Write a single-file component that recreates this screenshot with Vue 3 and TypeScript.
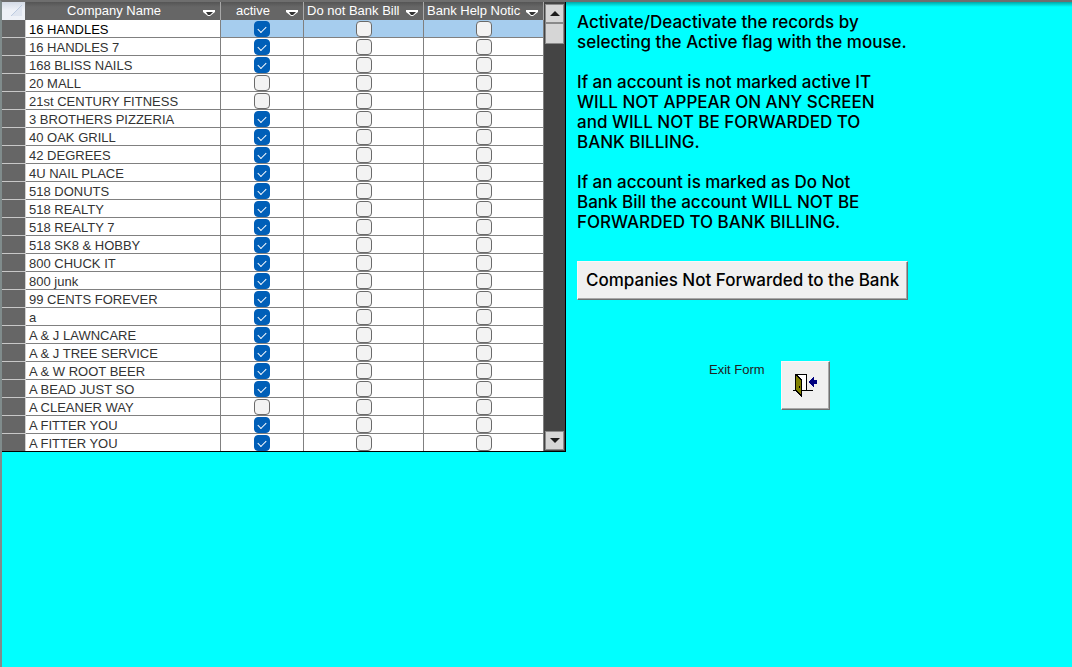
<script setup lang="ts">
import { ref } from 'vue'

interface Company {
  name: string
  active: boolean
  noBill: boolean
  helpNotice: boolean
}

const inactive = new Set([3, 4, 21])
const names: string[] = [
  '16 HANDLES', '16 HANDLES 7', '168 BLISS NAILS', '20 MALL',
  '21st CENTURY FITNESS', '3 BROTHERS PIZZERIA', '40 OAK GRILL', '42 DEGREES',
  '4U NAIL PLACE', '518 DONUTS', '518 REALTY', '518 REALTY 7',
  '518 SK8 & HOBBY', '800 CHUCK IT', '800 junk', '99 CENTS FOREVER',
  'a', 'A & J LAWNCARE', 'A & J TREE SERVICE', 'A & W ROOT BEER',
  'A BEAD JUST SO', 'A CLEANER WAY', 'A FITTER YOU', 'A FITTER YOU',
]

const companies = ref<Company[]>(
  names.map((name, i) => ({ name, active: !inactive.has(i), noBill: false, helpNotice: false })),
)
const current = ref(0)
const headings: string[] = ['Company Name', 'active', 'Do not Bank Bill', 'Bank Help Notic']
</script>

<template>
  <main class="form">
    <section class="datasheet">
      <table>
        <colgroup>
          <col class="c-select" />
          <col class="c-name" />
          <col class="c-active" />
          <col class="c-flag" />
          <col class="c-flag" />
        </colgroup>
        <thead>
          <tr>
            <th class="corner">
              <svg width="24" height="18" viewBox="0 0 24 18" aria-hidden="true">
                <path d="M20 3V14H9Z" fill="#dfe5f0" />
                <path d="M9 14L20 3" stroke="#bccbe0" />
              </svg>
            </th>
            <th v-for="(h, i) in headings" :key="h" scope="col">
              <div class="head">
                <span class="label" :class="{ centered: i < 2 }">{{ h }}</span>
                <button type="button" class="drop" :aria-label="'Filter ' + h">
                  <svg width="12" height="7" viewBox="0 0 12 7">
                    <path d="M0 0H12V2L7 6H5L0 2Z" fill="#fff" />
                    <path d="M3 2H10L7 5H5Z" fill="#333" />
                  </svg>
                </button>
              </div>
            </th>
          </tr>
        </thead>
        <tbody>
          <tr v-for="(c, i) in companies" :key="i" :class="{ current: i === current }" @click="current = i">
            <th class="selector"></th>
            <td class="name">{{ c.name }}</td>
            <td class="flag"><input v-model="c.active" type="checkbox" :aria-label="c.name + ' active'" /></td>
            <td class="flag"><input v-model="c.noBill" type="checkbox" :aria-label="c.name + ' do not bank bill'" /></td>
            <td class="flag"><input v-model="c.helpNotice" type="checkbox" :aria-label="c.name + ' bank help notice'" /></td>
          </tr>
        </tbody>
      </table>
      <div class="scrollbar">
        <button type="button" class="arrow" aria-label="Scroll up">
          <svg width="10" height="5" viewBox="0 0 10 5"><path d="M5 0L10 5H0Z" fill="#1c1c1c" /></svg>
        </button>
        <div class="thumb"></div>
        <button type="button" class="arrow down" aria-label="Scroll down">
          <svg width="10" height="5" viewBox="0 0 10 5"><path d="M0 0H10L5 5Z" fill="#1c1c1c" /></svg>
        </button>
      </div>
    </section>

    <section class="side">
      <p>Activate/Deactivate the records by<br />selecting the Active flag with the mouse.</p>
      <p>If an account is not marked active IT<br />WILL NOT APPEAR ON ANY SCREEN<br />and WILL NOT BE FORWARDED TO<br />BANK BILLING.</p>
      <p>If an account is marked as Do Not<br />Bank Bill the account WILL NOT BE<br />FORWARDED TO BANK BILLING.</p>
      <button type="button" class="raised wide">Companies Not Forwarded to the Bank</button>
      <div class="exit">
        <label for="exit-form">Exit Form</label>
        <button id="exit-form" type="button" class="raised square">
          <svg width="25" height="24" viewBox="0 0 25 24" shape-rendering="crispEdges" aria-hidden="true">
            <path d="M2 1H14V17H2Z" fill="#fff" />
            <path d="M2 0H14V17H13V1H2Z" fill="#000" />
            <path d="M0 16H2V17H0ZM9 16H20V17H9Z" fill="#000" />
            <path d="M2 0H3L9 6V23H8L2 17Z" fill="#000" />
            <path d="M3 2L8 7V21L3 16Z" fill="#808000" />
            <path d="M6 12H7V14H6Z" fill="#000" />
            <path d="M16 8L20 3H21V6H24V10H21V13H20L16 9Z" fill="#000080" />
          </svg>
        </button>
      </div>
    </section>
  </main>
</template>

<style>
body {
  background: #00ffff;
}
</style>

<style scoped>
.form {
  display: flex;
  align-items: flex-start;
  box-sizing: border-box;
  min-height: 100vh;
  border-top: 2px solid #6e6e6e;
  border-left: 2px solid #808c8c;
  background: linear-gradient(#00a8a8, #00ffff 5px);
  font-family: "Liberation Sans", Arial, sans-serif;
  color: #000;
}
.datasheet {
  display: flex;
  flex: none;
  border-right: 1px solid #000;
  border-bottom: 1px solid #000;
}
table {
  table-layout: fixed;
  width: 542px;
  border-collapse: separate;
  border-spacing: 0;
  background: #fff;
}
.c-select { width: 24px; }
.c-name { width: 195px; }
.c-active { width: 83px; }
.c-flag { width: 120px; }
th, td {
  box-sizing: border-box;
  height: 18px;
  padding: 0;
  font-weight: 400;
}
thead th {
  background: linear-gradient(#555, #666 5px);
  border-right: 1px solid #a8a8a8;
  color: #fff;
  font-size: 13px;
  line-height: 18px;
}
thead .corner {
  background: linear-gradient(#d4dbe6, #eef1f7 8px);
  border-right-color: #666;
  line-height: 0;
}
.head {
  display: flex;
  align-items: center;
  height: 18px;
  padding: 0 5px 0 3px;
  gap: 4px;
}
.label {
  flex: 1;
  min-width: 0;
  overflow: hidden;
  white-space: nowrap;
  text-align: left;
}
.centered {
  text-align: center;
}
.drop {
  flex: none;
  display: flex;
  padding: 4px 0 0;
  border: 0;
  background: none;
}
.selector {
  background: #666;
  border-right: 1px solid #d0d0d0;
  border-bottom: 1px solid #c8c8c8;
}
td {
  border-right: 1px solid #808080;
  border-bottom: 1px solid #808080;
}
tbody tr:last-child > * {
  height: 17px;
  border-bottom: 0;
}
.name {
  padding: 2px 0 0 3px;
  color: #333;
  font-size: 13px;
  line-height: 15px;
  white-space: nowrap;
}
.current .name {
  color: #000;
}
.current .flag {
  background: #a6cdee;
}
.flag {
  line-height: 0;
  text-align: center;
}
.flag input {
  appearance: none;
  display: block;
  box-sizing: border-box;
  width: 16px;
  height: 16px;
  margin: 0 auto;
  border: 1px solid #6a6a6a;
  border-radius: 4px;
  background: #f3f3f3;
}
.flag input:checked {
  border-color: #005fb8;
  background: #005fb8;
}
.flag input:checked::before {
  content: "";
  display: block;
  box-sizing: border-box;
  width: 8px;
  height: 5px;
  margin: 4px 0 0 3px;
  border-left: 1px solid #fff;
  border-bottom: 1px solid #fff;
  transform: rotate(-45deg);
}
.scrollbar {
  display: flex;
  flex-direction: column;
  width: 19px;
  padding: 2px 1px 1px;
  background: #444;
}
.arrow, .thumb {
  box-sizing: border-box;
  width: 19px;
  height: 20px;
  border: 1px solid #8a8a8a;
  background: #d6d6d6;
}
.arrow {
  display: flex;
  align-items: center;
  justify-content: center;
  height: 19px;
  padding: 0;
}
.thumb {
  height: 21px;
}
.down {
  margin-top: auto;
}
.side {
  flex: 1;
  min-width: 0;
  padding: 10px 0 0 11px;
}
p {
  margin: 0 0 20px;
  font-family: Inter, sans-serif;
  font-size: 17px;
  font-weight: 500;
  line-height: 20px;
}
.raised {
  border: 1px solid;
  border-color: #f8f8f8 #707070 #707070 #f8f8f8;
  box-shadow: inset -1px -1px 0 #a8a8a8;
  background: #f0f0f0;
  color: #000;
}
.wide {
  display: block;
  height: 39px;
  margin-top: 29px;
  padding: 0 8px 2px;
  font-family: Inter, sans-serif;
  font-size: 17px;
  font-weight: 500;
}
.exit {
  display: flex;
  align-items: flex-start;
  gap: 16px;
  margin: 61px 0 0 132px;
}
.exit label {
  color: #222;
  font-size: 13px;
  line-height: 18px;
}
.square {
  display: flex;
  align-items: center;
  justify-content: center;
  width: 49px;
  height: 49px;
  padding: 0;
}
</style>
